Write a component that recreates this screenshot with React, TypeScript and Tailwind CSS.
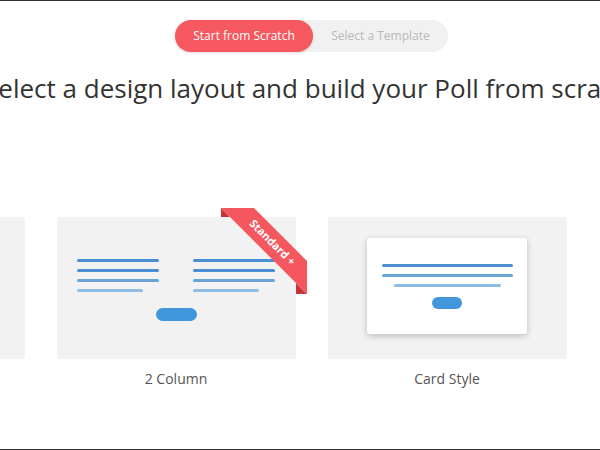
import React from "react";

const font = { fontFamily: '"Open Sans", "Liberation Sans", sans-serif' };

function Line({ w, color }: { w: string; color: string }) {
  return <div className={`h-[3px] rounded-full ${w} ${color}`} />;
}

function Ribbon() {
  return (
    <svg
      className="absolute top-[-9px] right-[-11px]"
      width="86"
      height="86"
      viewBox="0 0 86 86"
    >
      <polygon points="0,0 0,9 9,9" fill="#c7343a" />
      <polygon points="86,86 75,86 75,75" fill="#c7343a" />
      <polygon points="0,0 33,0 86,53 86,86" fill="#f4575d" />
      <text
        x="52"
        y="34"
        transform="rotate(45 52 34)"
        textAnchor="middle"
        dominantBaseline="central"
        fill="#ffffff"
        fontSize="11"
        fontWeight="700"
        style={font}
      >
        Standard +
      </text>
    </svg>
  );
}

function TwoColumn() {
  const col = (
    <div className="flex flex-col gap-[7px] w-[82px]">
      <Line w="w-[82px]" color="bg-[#4a8fd3]" />
      <Line w="w-[82px]" color="bg-[#4a8fd3]" />
      <Line w="w-[82px]" color="bg-[#6aa4da]" />
      <Line w="w-[66px]" color="bg-[#8fbde4]" />
    </div>
  );
  return (
    <div className="relative w-[239px] h-[142px] bg-[#f2f2f2] rounded-[3px] flex flex-col items-center pt-[42px]">
      <div className="flex gap-[34px] pr-[1px]">
        {col}
        {col}
      </div>
      <div className="mt-[16px] w-[41px] h-[13px] rounded-full bg-[#4196dc]" />
      <Ribbon />
    </div>
  );
}

function CardStyle() {
  return (
    <div className="w-[239px] h-[142px] bg-[#f2f2f2] rounded-[3px] flex justify-center pt-[21px]">
      <div className="w-[160px] h-[96px] bg-white rounded-[3px] shadow-[0_2px_6px_rgba(0,0,0,0.22)] flex flex-col items-center pt-[26px]">
        <div className="flex flex-col items-center gap-[7px]">
          <Line w="w-[131px]" color="bg-[#4a8fd0]" />
          <Line w="w-[131px]" color="bg-[#6aa5da]" />
          <Line w="w-[107px]" color="bg-[#8dbbe0]" />
        </div>
        <div className="mt-[10px] w-[30px] h-[12px] rounded-full bg-[#4196dc]" />
      </div>
    </div>
  );
}

function Item({ label, children }: { label?: string; children: React.ReactNode }) {
  return (
    <div className="flex flex-col items-center w-[239px]">
      {children}
      <div className="mt-[10px] h-[20px] leading-[20px] text-[14px] text-[#555]" style={font}>
        {label}
      </div>
    </div>
  );
}

export default function App() {
  return (
    <div className="w-[600px] h-[450px] overflow-hidden bg-white border-y border-[#333]" style={font}>
      <div className="ml-[-215px] w-[1053px] flex flex-col items-center pt-[19px]">
        <div className="flex items-center h-[32px] w-[273px] rounded-full bg-[#f1f1f1]">
          <div className="h-[32px] w-[138px] rounded-full bg-[#f5585e] shadow-[0_1px_3px_rgba(0,0,0,0.15)] text-white text-[12px] flex items-center justify-center">
            Start from Scratch
          </div>
          <div className="flex-1 text-[12px] text-[#b9b9b9] flex items-center justify-center">
            Select a Template
          </div>
        </div>
        <h1 className="mt-[20px] text-[26px] leading-[32px] text-[#333] whitespace-nowrap">
          Select a design layout and build your Poll from scratch
        </h1>
        <div className="mt-[113px] flex gap-[32px]">
          <Item>
            <div className="w-[239px] h-[142px] bg-[#f2f2f2] rounded-[3px]" />
          </Item>
          <Item label="2 Column">
            <TwoColumn />
          </Item>
          <Item label="Card Style">
            <CardStyle />
          </Item>
          <div className="w-[239px] h-[142px]" />
        </div>
      </div>
    </div>
  );
}
